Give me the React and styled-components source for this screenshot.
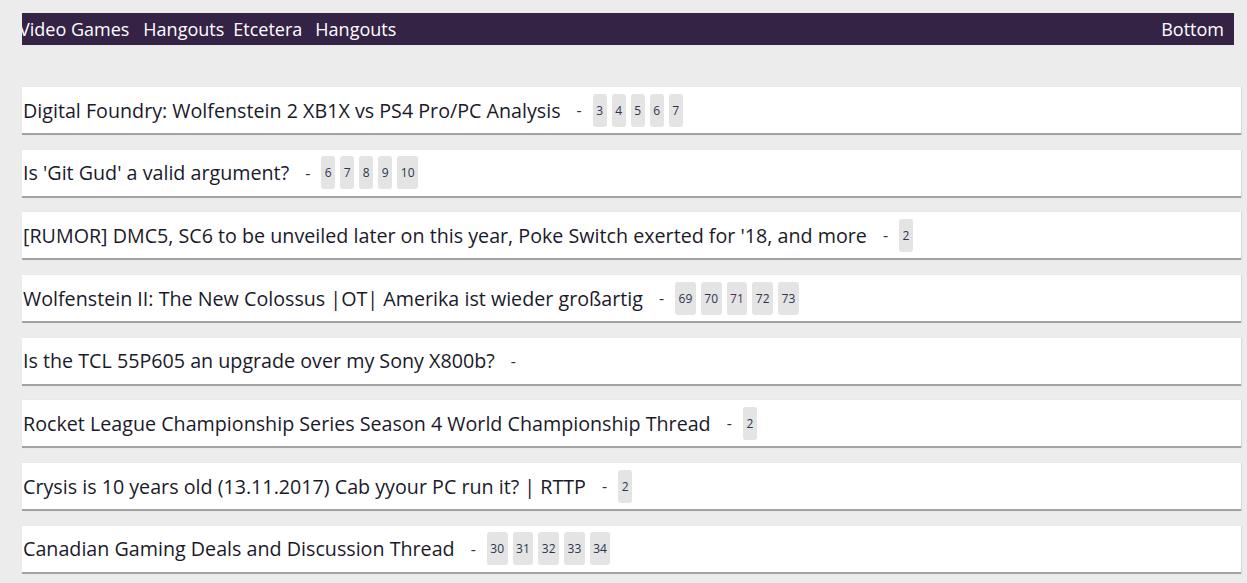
import React from "react";
import styled, { createGlobalStyle } from "styled-components";

const threads = [
  { title: "Digital Foundry: Wolfenstein 2 XB1X vs PS4 Pro/PC Analysis", pages: [3, 4, 5, 6, 7] },
  { title: "Is 'Git Gud' a valid argument?", pages: [6, 7, 8, 9, 10] },
  { title: "[RUMOR] DMC5, SC6 to be unveiled later on this year, Poke Switch exerted for '18, and more", pages: [2] },
  { title: "Wolfenstein II: The New Colossus |OT| Amerika ist wieder großartig", pages: [69, 70, 71, 72, 73], visited: 71 },
  { title: "Is the TCL 55P605 an upgrade over my Sony X800b?", pages: [] },
  { title: "Rocket League Championship Series Season 4 World Championship Thread", pages: [2] },
  { title: "Crysis is 10 years old (13.11.2017) Cab yyour PC run it? | RTTP", pages: [2] },
  { title: "Canadian Gaming Deals and Discussion Thread", pages: [30, 31, 32, 33, 34] },
];

const App = () => {
  return (
    <>
      <GlobalStyle />
      <Page>
        <NavBar>
          <NavLinks>
            <NavLink $first>Video Games</NavLink>
            <NavLink $gap={14}>Hangouts</NavLink>
            <NavLink $gap={9}>Etcetera</NavLink>
            <NavLink $gap={13}>Hangouts</NavLink>
          </NavLinks>
          <NavLink>Bottom</NavLink>
        </NavBar>
        <List>
          {threads.map((t) => (
            <Thread key={t.title}>
              <Title>{t.title}</Title>
              <Dash>-</Dash>
              <Pages>
                {t.pages.map((p) => (
                  <PageLink key={p} $visited={p === t.visited}>
                    {p}
                  </PageLink>
                ))}
              </Pages>
            </Thread>
          ))}
        </List>
      </Page>
    </>
  );
};

const GlobalStyle = createGlobalStyle`
  body {
    margin: 0;
    background: #ececec;
    font-family: "Open Sans", "Noto Sans", sans-serif;
  }
`;
const Page = styled.div`
  padding: 13px 6px 0 22px;
  height: 583px;
  overflow: hidden;
  box-sizing: border-box;
`;
const NavBar = styled.div`
  display: flex;
  justify-content: space-between;
  align-items: center;
  height: 32px;
  width: 1212px;
  padding-right: 10px;
  box-sizing: border-box;
  background: #352346;
  overflow: hidden;
`;
const NavLinks = styled.div`
  display: flex;
  align-items: center;
`;
const NavLink = styled.span`
  color: #fff;
  font-size: 18px;
  white-space: nowrap;
  margin-left: ${(p) => (p.$first ? "-3px" : `${p.$gap || 0}px`)};
`;
const List = styled.div`
  display: flex;
  flex-direction: column;
  gap: 14.7px;
  margin-top: 42px;
`;
const Thread = styled.div`
  display: flex;
  align-items: center;
  width: 1219px;
  height: 48px;
  box-sizing: border-box;
  padding-left: 1px;
  background: #fff;
  border-bottom: 2px solid #a3a3a3;
  box-shadow: 1px 0 1px rgba(0, 0, 0, 0.08);
`;
const Title = styled.span`
  font-size: 19.7px;
  color: #1a1a2a;
  white-space: nowrap;
`;
const Dash = styled.span`
  font-size: 16px;
  color: #333;
  margin: 0 11px 0 16px;
`;
const Pages = styled.div`
  display: flex;
  gap: 5px;
`;
const PageLink = styled.span`
  display: flex;
  align-items: center;
  justify-content: center;
  min-width: 14px;
  height: 33px;
  padding: 0 3.5px;
  box-sizing: border-box;
  border-radius: 3px;
  background: #e4e4e4;
  font-size: 12px;
  color: ${(p) => (p.$visited ? "#5a2a5a" : "#2b3550")};
`;

export default App;
